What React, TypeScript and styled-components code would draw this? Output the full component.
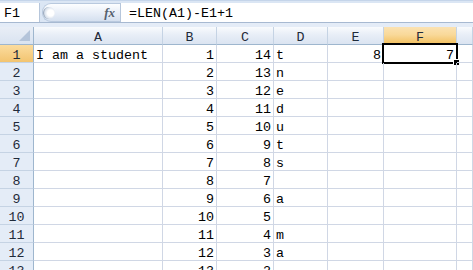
import React from "react";
import styled, { createGlobalStyle, css } from "styled-components";

const Global = createGlobalStyle`
  html, body { margin: 0; padding: 0; background: #ffffff; overflow: hidden; }
  #root { width: 473px; height: 270px; }
`;

const FONT = `"Liberation Mono", "Noto Sans CJK SC", monospace`;

const Window = styled.div`
  width: 473px;
  height: 270px;
  overflow: hidden;
  background: #dfe8f5;
  font-family: ${FONT};
  font-size: 13.33px;
  color: #000;
  display: flex;
  flex-direction: column;
`;

const FormulaBar = styled.div`
  flex-shrink: 0;
  height: 23px;
  box-sizing: border-box;
  display: flex;
  align-items: stretch;
  padding-top: 2px;
  border-top: 1px solid #c5d5ea;
  border-bottom: 1px solid #a7b9d1;
  background: #dbe6f4;
`;

const NameBox = styled.div`
  width: 40px;
  background: #fff;
  display: flex;
  align-items: center;
  padding: 1px 0 0 4px;
  box-sizing: border-box;
  border-right: 1px solid #b6c6db;
`;

const FxArea = styled.div`
  width: 78px;
  margin-left: 2px;
  border-radius: 9px 0 0 9px;
  background: linear-gradient(#fdfeff 0%, #e9eff8 50%, #d5e0ef 100%);
  border: 1px solid #b9c9de;
  border-right: none;
  box-sizing: border-box;
  display: flex;
  align-items: center;
  justify-content: space-between;
  padding: 0 5px 0 0;
`;

const Knob = styled.div`
  width: 12px;
  height: 12px;
  border-radius: 50%;
  background: radial-gradient(circle at 60% 50%, #ffffff 35%, #d4dde9 70%, #9aa8ba 100%);
  border-left: 1px solid #9aa9bc;
  box-sizing: border-box;
`;

const FxLabel = styled.span`
  font-family: "Liberation Serif", serif;
  font-style: italic;
  font-size: 13px;
  color: #55606e;
  font-weight: bold;
`;

const FormulaInput = styled.div`
  flex: 1;
  background: #fff;
  border-left: 1px solid #b6c6db;
  display: flex;
  align-items: center;
  padding: 1px 0 0 8px;
  white-space: pre;
`;

const Spacer = styled.div`
  flex-shrink: 0;
  height: 4px;
  background: #e4ecf7;
`;

const COLS = "34px 129px 54px 57px 54px 56px 73px 1fr";

const Grid = styled.div`
  display: grid;
  grid-template-columns: ${COLS};
  grid-auto-rows: 18px;
  background: #fff;
  flex: 1 1 0;
  min-height: 0;
  overflow: hidden;
  align-content: start;
`;

const cellBase = css`
  box-sizing: border-box;
  border-right: 1px solid #d0d7e5;
  border-bottom: 1px solid #d0d7e5;
  line-height: 15px;
  padding-top: 3px;
  white-space: pre;
  overflow: visible;
  position: relative;
`;

const Corner = styled.div`
  ${cellBase};
  background: linear-gradient(#e9eef6, #d9e3f1);
  border-right: 1px solid #9eb6ce;
  border-bottom: 1px solid #9eb6ce;
`;

const CornerTri = styled.div`
  position: absolute;
  right: 3px;
  bottom: 3px;
  width: 0;
  height: 0;
  border-left: 11px solid transparent;
  border-bottom: 11px solid #b4c4da;
`;

const ColHead = styled.div<{ $active?: boolean }>`
  ${cellBase};
  text-align: center;
  color: #1f2a3a;
  border-right: 1px solid #c5d3e4;
  border-bottom: 1px solid #9eb6ce;
  background: ${(p) =>
    p.$active
      ? "linear-gradient(#fbe2b2 0%, #f9d99a 45%, #f2c05f 100%)"
      : "linear-gradient(#f9fbfd 0%, #e8eef7 45%, #dbe4f1 100%)"};
`;

const RowHead = styled.div<{ $active?: boolean }>`
  ${cellBase};
  text-align: center;
  color: #1f2a3a;
  border-right: 1px solid #9eb6ce;
  border-bottom: 1px solid #c5d3e4;
  background: ${(p) =>
    p.$active ? "linear-gradient(#fbdc9f, #f3c470)" : "#e4ecf7"};
`;

const Cell = styled.div<{ $num?: boolean }>`
  ${cellBase};
  text-align: ${(p) => (p.$num ? "right" : "left")};
  padding-left: ${(p) => (p.$num ? "0" : "2px")};
  padding-right: ${(p) => (p.$num ? "2px" : "0")};
  z-index: ${(p) => (p.$num ? 0 : 1)};
`;

const Selection = styled.div`
  position: absolute;
  top: -2px;
  left: -2px;
  right: -2px;
  bottom: -2px;
  border: 2px solid #000;
  pointer-events: none;
  z-index: 3;
`;

const FillHandle = styled.div`
  position: absolute;
  right: -4px;
  bottom: -4px;
  width: 5px;
  height: 5px;
  background: #000;
  border: 1px solid #fff;
  z-index: 4;
`;

const headers = ["A", "B", "C", "D", "E", "F", ""];

type Row = { a?: string; b?: number; c?: number; d?: string; e?: number; f?: number };

const rows: Row[] = [
  { a: "I am a student", b: 1, c: 14, d: "t", e: 8, f: 7 },
  { b: 2, c: 13, d: "n" },
  { b: 3, c: 12, d: "e" },
  { b: 4, c: 11, d: "d" },
  { b: 5, c: 10, d: "u" },
  { b: 6, c: 9, d: "t" },
  { b: 7, c: 8, d: "s" },
  { b: 8, c: 7 },
  { b: 9, c: 6, d: "a" },
  { b: 10, c: 5 },
  { b: 11, c: 4, d: "m" },
  { b: 12, c: 3, d: "a" },
  { b: 13, c: 2 },
];

export default function App() {
  return (
    <Window>
      <Global />
      <FormulaBar>
        <NameBox>F1</NameBox>
        <FxArea>
          <Knob />
          <FxLabel>fx</FxLabel>
        </FxArea>
        <FormulaInput>=LEN(A1)-E1+1</FormulaInput>
      </FormulaBar>
      <Spacer />
      <Grid>
        <Corner>
          <CornerTri />
        </Corner>
        {headers.map((h, i) => (
          <ColHead key={i} $active={h === "F"}>
            {h}
          </ColHead>
        ))}
        {rows.map((r, i) => (
          <React.Fragment key={i}>
            <RowHead $active={i === 0}>{i + 1}</RowHead>
            <Cell>{r.a ?? ""}</Cell>
            <Cell $num>{r.b ?? ""}</Cell>
            <Cell $num>{r.c ?? ""}</Cell>
            <Cell>{r.d ?? ""}</Cell>
            <Cell $num>{r.e ?? ""}</Cell>
            <Cell $num>
              {r.f ?? ""}
              {i === 0 && (
                <Selection>
                  <FillHandle />
                </Selection>
              )}
            </Cell>
            <Cell />
          </React.Fragment>
        ))}
      </Grid>
    </Window>
  );
}
